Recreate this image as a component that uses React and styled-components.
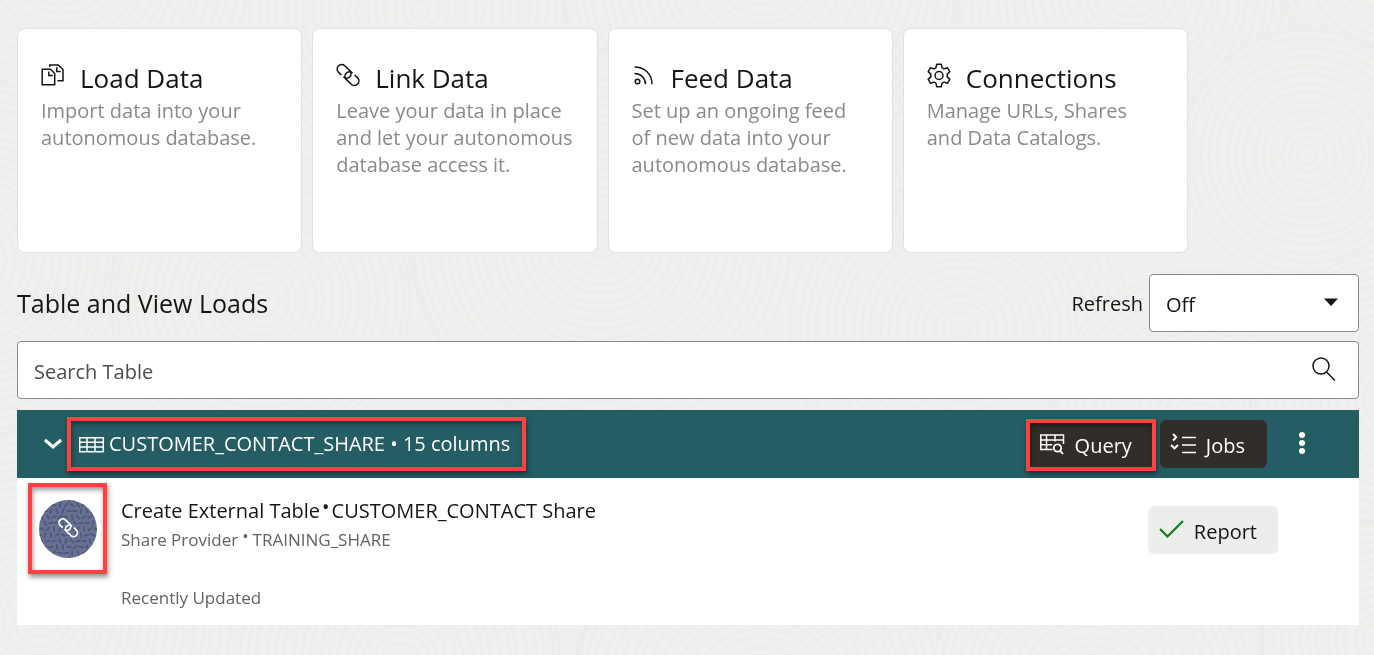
import React from "react";
import styled, { createGlobalStyle, css } from "styled-components";

const GlobalStyle = createGlobalStyle`
  *, *::before, *::after { box-sizing: border-box; }
  body {
    margin: 0;
    background: #f0efed;
    color: #161513;
    font-family: "Open Sans", "Noto Sans", sans-serif;
    font-size: 20px;
    line-height: 27px;
  }
  h2, h3, p { margin: 0; font-weight: 400; }
  button, input, select { font: inherit; color: inherit; }
`;

const Backdrop = styled.svg`
  position: fixed;
  inset: 0;
  z-index: -1;
  width: 100%;
  height: 100%;
`;

const Page = styled.main`
  padding: 28px 15px 30px 17px;
`;

const CardGrid = styled.section`
  display: grid;
  grid-template-columns: repeat(4, minmax(0, 1fr));
  gap: 10px;
  max-width: 1171px;
`;

const Card = styled.a`
  display: block;
  min-height: 225px;
  padding: 34px 23px 24px 23px;
  border: 1px solid #e2e1df;
  border-radius: 8px;
  background: #fff;
  color: inherit;
  text-decoration: none;
`;

const CardHead = styled.div`
  display: flex;
  align-items: flex-start;
  gap: 15px;
  height: 34px;
`;

const CardTitle = styled.h3`
  font-size: 26px;
  line-height: 30px;
`;

const CardText = styled.p`
  color: #8b8a89;
`;

const Icon = styled.svg`
  display: block;
  flex: none;
  width: 24px;
  height: 24px;
  fill: none;
  stroke: ${(p) => p.$color || "currentColor"};
  stroke-width: ${(p) => p.$weight || 1.5};
  overflow: visible;
`;

const SectionBar = styled.div`
  display: flex;
  align-items: center;
  justify-content: space-between;
  margin-top: 21px;
`;

const SectionTitle = styled.h2`
  font-size: 25px;
  line-height: 32px;
`;

const RefreshField = styled.div`
  display: flex;
  align-items: center;
  gap: 6px;
`;

const SelectBox = styled.div`
  display: grid;
  align-items: center;
  width: 210px;

  > * { grid-area: 1 / 1; }
  > svg { justify-self: end; margin-right: 16px; pointer-events: none; }
`;

const fieldBox = css`
  width: 100%;
  height: 58px;
  border: 1px solid #8b8987;
  border-radius: 4px;
  background: #fff;
`;

const Select = styled.select`
  ${fieldBox}
  appearance: none;
  padding: 2px 16px 0;
`;

const SearchBox = styled.div`
  ${fieldBox}
  display: flex;
  align-items: center;
  margin-top: 9px;
  padding: 0 22px 0 16px;
`;

const SearchInput = styled.input`
  flex: 1;
  min-width: 0;
  padding: 2px 0 0;
  border: 0;
  outline: 0;
  background: transparent;

  &::placeholder { color: #4f4c49; opacity: 1; }
`;

const Panel = styled.section`
  margin-top: 11px;
  background: #fff;
`;

const PanelBar = styled.header`
  display: flex;
  align-items: center;
  height: 68px;
  padding: 0 45px 0 25px;
  background: #255d64;
  color: #fff;
`;

const Highlight = styled.div`
  position: relative;
  display: flex;
  align-items: center;

  &::after {
    content: "";
    position: absolute;
    inset: ${(p) => p.$inset};
    border: 4px solid #ff4142;
    box-shadow: 1px 3px 5px rgba(0, 0, 0, 0.45), inset 1px 3px 5px rgba(0, 0, 0, 0.4);
    pointer-events: none;
  }
`;

const IconButton = styled.button`
  display: flex;
  padding: 0;
  border: 0;
  background: none;
`;

const CollapseButton = styled(IconButton)`
  margin-right: 13px;
`;

const MoreButton = styled(IconButton)`
  margin-left: 17px;
`;

const TableName = styled.h3`
  margin-left: 6px;
  font-size: 20px;
  line-height: 28px;
  white-space: nowrap;
`;

const BarActions = styled.div`
  display: flex;
  align-items: center;
  gap: 6px;
  margin-left: auto;
`;

const Button = styled.button`
  display: flex;
  align-items: center;
  gap: 11px;
  height: 48px;
  padding: 0 ${(p) => (p.$dark ? 22 : 21)}px 0 11px;
  border: 0;
  border-radius: 6px;
  background: ${(p) => (p.$dark ? "#312d2a" : "#ededeb")};
  color: ${(p) => (p.$dark ? "#fff" : "#161513")};
  white-space: nowrap;

  > span { padding-top: 2px; }
`;

const Row = styled.article`
  display: flex;
  align-items: flex-start;
  min-height: 147px;
  padding: 19px 81px 13px 22px;
`;

const AvatarSlot = styled.div`
  padding-top: 3px;
`;

const Avatar = styled.svg`
  display: block;
  width: 58px;
  height: 58px;
`;

const RowBody = styled.div`
  flex: 1;
  margin-left: 24px;
`;

const RowTitle = styled.p`
  line-height: 28px;
`;

const RowMeta = styled.p`
  margin-top: ${(p) => p.$top || 0}px;
  color: #65625f;
  font-size: 17px;
  line-height: 29px;
`;

const Dot = styled.span`
  margin: 0 ${(p) => p.$gap}px;
  vertical-align: 4px;
  line-height: 1;
`;

const ReportSlot = styled.div`
  padding-top: 9px;
`;

function LinkShape() {
  return (
    <g transform="rotate(43 12 12)">
      <path d="M7.200 16.500H3.300a4.500 4.500 0 0 1 0-9h6.700a4.500 4.500 0 0 1 0 9" />
      <path d="M16.800 7.500H20.700a4.500 4.500 0 0 1 0 9h-6.700a4.500 4.500 0 0 1 0-9" />
    </g>
  );
}

const DocumentsIcon = () => (
  <Icon viewBox="0 0 24 24" aria-hidden="true">
    <path d="M1.200 6.200h8.300l4.200 4.300v11.300H1.200z" />
    <path d="M7.800 8.500v4h4" />
    <path d="M8.800 4V2h8.500l4.700 4.500v11.200h-5.500" />
    <path d="M15.800 4.300v4.200h4" />
  </Icon>
);

const LinkIcon = () => (
  <Icon viewBox="0 0 24 24" $weight={1.6} aria-hidden="true">
    <LinkShape />
  </Icon>
);

const FeedIcon = () => (
  <Icon viewBox="0 0 24 24" aria-hidden="true">
    <circle cx="5.500" cy="18.500" r="2.300" />
    <path d="M2.500 10.500c6 0 11 4.500 11 10.700" />
    <path d="M2.500 4C12.500 4 20 11 20 21.200" />
  </Icon>
);

const GearIcon = () => (
  <Icon viewBox="0 0 24 24" aria-hidden="true">
    <circle cx="12" cy="12.500" r="4" />
    <path
      strokeLinejoin="round"
      d="M9.700 1.300h4.600l.8 3.500 2 1.100 3.300-1.200 2.400 3.900-2.600 2.500v2.800l2.600 2.500-2.400 3.900-3.300-1.200-2 1.100-.8 3.500H9.700l-.8-3.500-2-1.100-3.300 1.200-2.400-3.900 2.600-2.500v-2.800L1.200 8.600l2.400-3.900 3.300 1.200 2-1.100z"
    />
  </Icon>
);

const CARDS = [
  { title: "Load Data", text: "Import data into your autonomous database.", icon: <DocumentsIcon /> },
  { title: "Link Data", text: "Leave your data in place and let your autonomous database access it.", icon: <LinkIcon /> },
  { title: "Feed Data", text: "Set up an ongoing feed of new data into your autonomous database.", icon: <FeedIcon /> },
  { title: "Connections", text: "Manage URLs, Shares and Data Catalogs.", icon: <GearIcon /> },
];

const SWIRLS = [
  [60, -40, 190], [420, 10, 170], [760, -30, 200], [1130, -10, 175], [1400, -50, 130],
  [-30, 260, 180], [260, 300, 150], [600, 240, 190], [960, 330, 170], [1307, 155, 125],
  [1200, 420, 150], [1400, 400, 150], [40, 620, 190], [400, 660, 160], [760, 700, 190],
  [1090, 690, 160], [1380, 640, 120],
];

function Swirls() {
  return (
    <Backdrop viewBox="0 0 1374 655" preserveAspectRatio="xMidYMid slice" aria-hidden="true">
      {SWIRLS.map(([cx, cy, max], i) => (
        <g key={i} fill="none" stroke="#edecea" strokeWidth="3">
          <circle cx={cx} cy={cy} r={max} fill="#f0efed" />
          {Array.from({ length: Math.floor(max / 9) }, (_, n) => (
            <ellipse key={n} cx={cx + (n % 3)} cy={cy} rx={(n + 1) * 9} ry={(n + 1) * 9 - (n % 2)} />
          ))}
        </g>
      ))}
    </Backdrop>
  );
}

function AvatarArt() {
  const dashes = [];
  for (let y = 0; y < 11; y++) {
    for (let x = 0; x < 10; x++) {
      const cx = x * 6 + (y % 2) * 3;
      const cy = y * 6 - 1;
      const angle = Math.sin(x * 1.3 + y * 0.4) * 65 + Math.cos(y * 1.7) * 55;
      dashes.push(
        <path key={`${x}-${y}`} d={`M${cx - 2} ${cy}h4`} transform={`rotate(${angle} ${cx} ${cy})`} />
      );
    }
  }
  return (
    <Avatar viewBox="0 0 58 58" role="img" aria-label="Link">
      <clipPath id="disc"><circle cx="29" cy="29" r="29" /></clipPath>
      <g clipPath="url(#disc)">
        <rect width="58" height="58" fill="#667095" />
        <g stroke="#4f5673" strokeWidth="1.700" fill="none" strokeLinecap="round">{dashes}</g>
      </g>
      <g transform="translate(19 17.500) scale(.85)" stroke="#fff" strokeWidth="2" fill="none">
        <LinkShape />
      </g>
    </Avatar>
  );
}

export default function App() {
  return (
    <>
      <GlobalStyle />
      <Swirls />
      <Page>
        <CardGrid>
          {CARDS.map((card) => (
            <Card key={card.title} href="#">
              <CardHead>
                {card.icon}
                <CardTitle>{card.title}</CardTitle>
              </CardHead>
              <CardText>{card.text}</CardText>
            </Card>
          ))}
        </CardGrid>

        <SectionBar>
          <SectionTitle>Table and View Loads</SectionTitle>
          <RefreshField>
            <label htmlFor="refresh">Refresh</label>
            <SelectBox>
              <Select id="refresh" defaultValue="Off">
                <option>Off</option>
              </Select>
              <Icon viewBox="0 0 24 24" aria-hidden="true">
                <path d="M5 7.500h14l-7 7.500z" fill="currentColor" stroke="none" />
              </Icon>
            </SelectBox>
          </RefreshField>
        </SectionBar>

        <SearchBox>
          <SearchInput type="text" placeholder="Search Table" aria-label="Search Table" />
          <Icon viewBox="0 0 24 24" aria-hidden="true">
            <circle cx="9" cy="8" r="8" />
            <path d="M14.500 14l8.500 8.500" />
          </Icon>
        </SearchBox>

        <Panel>
          <PanelBar>
            <CollapseButton type="button" aria-label="Collapse">
              <Icon viewBox="0 0 24 24" $weight={3} aria-hidden="true">
                <path d="M3 8l8 7 8-7" />
              </Icon>
            </CollapseButton>
            <Highlight $inset="-13px -16px -13px -12px">
              <Icon viewBox="0 0 24 24" aria-hidden="true">
                <path d="M.7 5.700h23.600v14H.7zM.5 10.200h24M.5 15h24M8 5.500v14M16 5.500v14" />
              </Icon>
              <TableName>CUSTOMER_CONTACT_SHARE • 15 columns</TableName>
            </Highlight>
            <BarActions>
              <Highlight $inset="-1px -2px -3px -3px">
                <Button type="button" $dark>
                  <Icon viewBox="0 0 24 24" aria-hidden="true">
                    <path d="M12.500 17.500H.8v-14.500h22.700v9M.8 8h22.700M.8 12.800h11.500M6.500 3v14.500M15 3v6.500" />
                    <circle cx="17.500" cy="16" r="3.700" strokeWidth="1.800" />
                    <path d="M20 18.700l3 3.300" strokeWidth="1.800" />
                  </Icon>
                  <span>Query</span>
                </Button>
              </Highlight>
              <Button type="button" $dark>
                <Icon viewBox="0 0 24 24" aria-hidden="true">
                  <path d="M11 5.500H25M11 13H25M11 20.500H25" />
                  <path d="M2 2l3.300 3.300L2 8.500M0 13l3.500 3.300L7 13" strokeWidth="2" />
                </Icon>
                <span>Jobs</span>
              </Button>
              <MoreButton type="button" aria-label="More actions">
                <Icon viewBox="0 0 24 24" aria-hidden="true">
                  <g fill="currentColor" stroke="none">
                    <circle cx="12" cy="3" r="3" />
                    <circle cx="12" cy="11" r="3" />
                    <circle cx="12" cy="19" r="3" />
                  </g>
                </Icon>
              </MoreButton>
            </BarActions>
          </PanelBar>

          <Row>
            <AvatarSlot>
              <Highlight $inset="-17px -10px -16px -11px">
                <AvatarArt />
              </Highlight>
            </AvatarSlot>
            <RowBody>
              <RowTitle>
                Create External Table<Dot $gap={2}>•</Dot>CUSTOMER_CONTACT Share
              </RowTitle>
              <RowMeta>
                Share Provider<Dot $gap={4}>•</Dot>TRAINING_SHARE
              </RowMeta>
              <RowMeta $top={29}>Recently Updated</RowMeta>
            </RowBody>
            <ReportSlot>
              <Button type="button">
                <Icon viewBox="0 0 24 24" $weight={2.2} $color="#0b8113" aria-hidden="true">
                  <path d="M1 11l7.500 7.500L24 3" />
                </Icon>
                <span>Report</span>
              </Button>
            </ReportSlot>
          </Row>
        </Panel>
      </Page>
    </>
  );
}
